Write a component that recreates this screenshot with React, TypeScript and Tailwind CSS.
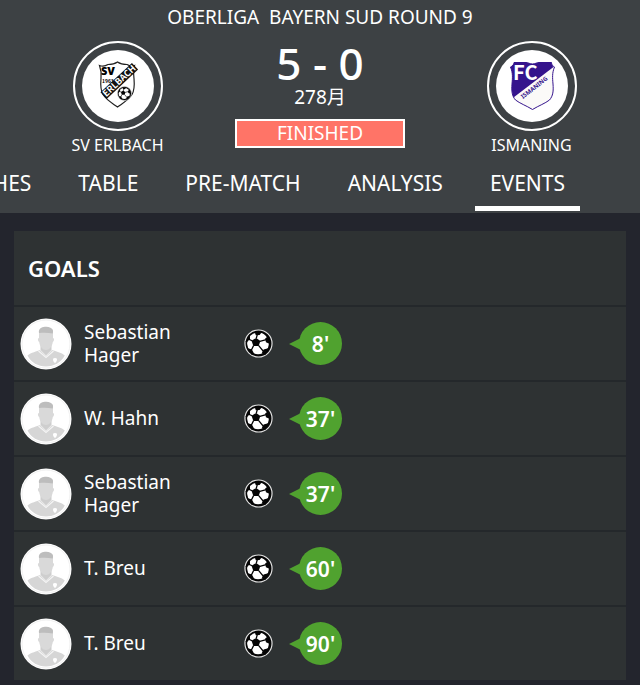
import { useState } from "react";
import clsx from "clsx";

interface Goal {
  id: number;
  player: string;
  minute: number;
}

const TABS = ["MATCHES", "TABLE", "PRE-MATCH", "ANALYSIS", "EVENTS"];

const GOALS: Goal[] = [
  { id: 1, player: "Sebastian Hager", minute: 8 },
  { id: 2, player: "W. Hahn", minute: 37 },
  { id: 3, player: "Sebastian Hager", minute: 37 },
  { id: 4, player: "T. Breu", minute: 60 },
  { id: 5, player: "T. Breu", minute: 90 },
];

const BallShapes = () => (
  <>
    <circle cx="15" cy="15" r="14" fill="#050505" stroke="#e4e4e4" strokeWidth="1.2" />
    <circle cx="14.5" cy="14.8" r="11.2" fill="#fff" />
    {/* seams running from the centre patch to the rim patches */}
    <path
      d="M12.7 9.6 14 5M16.4 12.7 23 11M15 17l5 6M9.9 17.2 7 23M8.4 12.2 3.5 10"
      stroke="#050505"
      strokeWidth="1.3"
    />
    <g fill="#050505">
      <path d="m12.7 9.2 4.2 3.3-1.7 5-5.5.2-1.9-5.6z" />
      <path d="M11 3h7.5l-2.3 3.2-4 .2z" />
      <path d="m25.5 7-3.6 2.8.8 4 4 1.7z" />
      <path d="m25 20-4.7 1.200-2 3.800L22 27z" />
      <path d="m4 20 4.2 1.200 2.300 4.300L8 27z" />
      <path d="m6 5 .2 4.500L4 13l-2.500.5z" />
    </g>
  </>
);

const Avatar = () => (
  <svg viewBox="0 0 52 52" className="size-[52px] shrink-0" aria-hidden="true">
    <circle cx="26" cy="26" r="25.5" fill="#fff" />
    <circle cx="26" cy="26" r="24" fill="none" stroke="#f1f1f1" />
    <path d="M7.5 37.5C11 34.5 17 33.5 20 32l6 6 6-6c4 1.5 9.5 2.5 12.8 5.5C41 44.5 34 48.5 26 48.5S11 44.5 7.5 37.5z" fill="#d6d6d6" />
    <path d="M20.5 25h11v7L26 37.5 20.5 32z" fill="#cecece" />
    <path d="M19 14h14v6c1.5 0 1.3 3-.2 4-.6 4.5-3.6 8-6.8 8s-6.2-3.5-6.8-8c-1.5-1-1.7-4-.2-4z" fill="#d9d9d9" />
    <path d="M19 15c-.6-3.5 1.3-5.4 4.5-6 4-1 8.5.3 9.4 3 .3 1.2.1 2.5-.2 3.6-4-1-9-1-13.7-.6z" fill="#bdbdbd" />
    <path d="m18.5 33 7.5 6.5 7.5-6.5" fill="none" stroke="#f4f4f4" strokeWidth="1.3" />
    <path d="M33 40.5c1 0 1.5-.2 2-.7.5.5 1 .7 2 .7 0 2.5-.5 3.6-2 4.5-1.5-.9-2-2-2-4.5z" fill="#fff" />
  </svg>
);

const ErlbachCrest = () => (
  <svg viewBox="0 0 72 72" className="size-[72px]" aria-hidden="true">
    <path
      d="M17.5 15.5c3 1 6 .6 8.5-1 3 0 6.5-.4 9.5-2.5 3 2.1 6.5 2.5 9.5 2.5 2.5 1.6 5 2 7.5 1-1.5 4-1 8-.5 13 .5 6 1 11-2 16-3.5 5.5-9 8.5-14.5 12.5-5.5-4-11-7-14.5-12.5-3-5-2.5-10-2-16 .5-5 0-9-1.5-13z"
      fill="#fff"
      stroke="#222"
      strokeWidth="1.2"
    />
    <text x="19" y="25" className="fill-black text-[11px] font-black">SV</text>
    <text x="20" y="33" className="fill-black font-['Noto_Sans_CJK_JP'] text-[5px] font-bold">1963</text>
    <g transform="rotate(-43 38 31)">
      <rect x="16" y="26" width="43" height="9" fill="#111" />
      <text
        x="37.5"
        y="33.5"
        textAnchor="middle"
        textRendering="geometricPrecision"
        className="fill-white font-['Noto_Sans_CJK_JP'] text-[9px] font-bold"
      >
        ERLBACH
      </text>
    </g>
    <g transform="translate(35 36) scale(.5)">
      <BallShapes />
    </g>
  </svg>
);

const IsmaningCrest = () => (
  <svg viewBox="0 0 72 72" className="size-[72px]" aria-hidden="true">
    <path
      d="M18 12.5h12c2 0 4 1.5 6.5 1.5s4.5-1.5 6.5-1.5h12.5c0 2 1 3.5 3 4.5-2.5 6-2 11-1.5 17 .6 7 0 12-3.5 16-4.5 3.5-10.5 5.5-17 9.5-6.5-4-12.5-6-17-9.5-3.5-4-4.1-9-3.5-16 .5-6 1-11-1.5-17 2-1 3.5-2.5 3.5-4.5z"
      fill="#fbfaf8"
      stroke="#35148c"
      strokeWidth="1"
    />
    <path
      d="M18 12.5h12c2 0 4 1.5 6.5 1.5s4.5-1.5 6.5-1.5h12.5c0 2 1 3.5 2 4.5L17.5 47.5c-1.5-4-2-8-1.5-13.500.5-6 1-11-1.5-17 2-1 3.5-2.500 3.500-4.500z"
      fill="#35148c"
    />
    <text x="17" y="30" className="fill-white font-['Noto_Sans_CJK_JP'] text-[20px] font-bold">FC</text>
    <text
      x="27"
      y="49"
      transform="rotate(-38 27 49)"
      textRendering="geometricPrecision"
      className="fill-[#35148c] text-[6px] font-bold"
    >
      ISMANING
    </text>
  </svg>
);

const Team = ({ name, children }: { name: string; children: React.ReactNode }) => (
  <div className="flex flex-col items-center">
    <div className="flex size-[90px] items-center justify-center rounded-full border-2 border-white">
      <div className="overflow-hidden rounded-full bg-white">{children}</div>
    </div>
    <span className="mt-0.5 text-base leading-6">{name}</span>
  </div>
);

const GoalRow = ({ goal }: { goal: Goal }) => (
  <li className="flex h-[75px] items-center border-t-2 border-[#24282b] pl-[6px]">
    <Avatar />
    <span className="ml-3 w-28 text-[19px] leading-[23px]">{goal.player}</span>
    <svg viewBox="0 0 30 30" className="ml-12 size-[29px] shrink-0" role="img" aria-label="Goal">
      <BallShapes />
    </svg>
    <div className="ml-4 flex items-center">
      <svg viewBox="0 0 14 14" className="-mr-1 size-[14px]" aria-hidden="true">
        <path d="M0 7 14 0v14z" fill="#50a22f" />
      </svg>
      <span className="flex size-[43px] items-center justify-center rounded-full bg-[#50a22f] text-[21px] font-semibold leading-7">
        {goal.minute}'
      </span>
    </div>
  </li>
);

const App = () => {
  const [activeTab, setActiveTab] = useState("EVENTS");

  return (
    <div className="min-h-screen bg-[#23252d] font-['Noto_Sans','Noto_Sans_CJK_JP',sans-serif] text-white">
      <header className="bg-[#3d4144] pt-[3px]">
        <h1 className="whitespace-pre text-center text-[19px] font-normal leading-7">
          {"OBERLIGA  BAYERN SUD ROUND 9"}
        </h1>

        <div className="mt-[10px] grid grid-cols-[1fr_170px_1fr]">
          <Team name="SV ERLBACH">
            <ErlbachCrest />
          </Team>
          <div className="flex flex-col items-center">
            <p className="text-[44px] font-medium leading-[44px]">5 - 0</p>
            <p className="text-[19px] leading-6">278月</p>
            <p className="mt-[10px] w-full border-2 border-white bg-[#ff7467] text-center text-[19px] leading-[25px]">
              FINISHED
            </p>
          </div>
          <div className="pl-[18px]">
            <Team name="ISMANING">
              <IsmaningCrest />
            </Team>
          </div>
        </div>

        <nav className="flex justify-end gap-[17px] overflow-hidden pr-[60px]">
          {TABS.map((tab) => (
            <button
              key={tab}
              type="button"
              onClick={() => setActiveTab(tab)}
              className={clsx(
                "mb-0.5 h-[54px] shrink-0 border-b-[5px] px-[15px] pt-0.5 text-[21px] leading-7",
                activeTab === tab ? "border-white" : "border-transparent"
              )}
            >
              {tab}
            </button>
          ))}
        </nav>
      </header>

      <main className="px-[14px] pt-[18px]">
        <section className="bg-[#2e3233]">
          <h2 className="flex h-[74px] items-center px-[14px] text-[22px] font-semibold">GOALS</h2>
          <ul>
            {GOALS.map((goal) => (
              <GoalRow key={goal.id} goal={goal} />
            ))}
          </ul>
        </section>
      </main>
    </div>
  );
};

export default App;
